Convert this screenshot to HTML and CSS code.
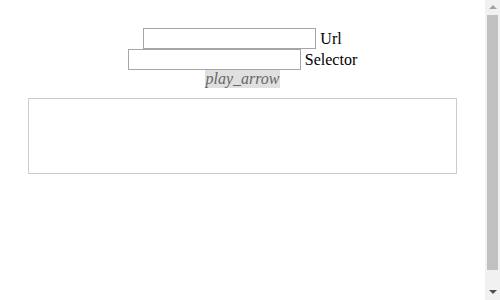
FILE: index.html
```html
<!DOCTYPE html>
<html>
<head>
<meta charset="utf-8">
<link rel="stylesheet" href="styles.css">
</head>
<body>
<div class="form">
  <div class="row"><input type="text" class="field"> Url</div>
  <div class="row"><input type="text" class="field"> Selector</div>
  <div class="row"><i class="run">play_arrow</i></div>
</div>
<div class="output"></div>
<div class="scrollbar">
  <span class="arrow arrow-up"></span>
  <span class="thumb"></span>
  <span class="arrow arrow-down"></span>
</div>
</body>
</html>
```
FILE: styles.css
```css
body {
  margin: 8px 23px 8px 8px;
  font-family: "Liberation Serif", "Times New Roman", serif;
  font-size: 16px;
  color: #000;
  background: #fff;
}
.form {
  padding-top: 20px;
  text-align: center;
}
.row {
  height: 21px;
  line-height: 21px;
}
.field {
  box-sizing: border-box;
  width: 173px;
  height: 21px;
  margin: 0;
  padding: 1px 2px;
  border: 1px solid #a6a6a6;
  vertical-align: top;
  font-size: 13px;
}
.run {
  display: inline-block;
  line-height: 18px;
  color: #666;
  background: #e0e0e0;
  vertical-align: top;
}
.output {
  margin: 7px 20px 0;
  height: 74px;
  border: 1px solid #ccc;
}
.scrollbar {
  position: fixed;
  top: 0;
  right: 0;
  width: 15px;
  height: 100%;
  background: #f1f1f1;
}
.thumb {
  position: absolute;
  top: 15px;
  left: 2px;
  width: 11px;
  height: 255px;
  background: #c1c1c1;
}
.arrow {
  position: absolute;
  left: 4px;
  width: 0;
  height: 0;
  border-left: 4px solid transparent;
  border-right: 4px solid transparent;
}
.arrow-up {
  top: 5px;
  border-bottom: 4px solid #a3a3a3;
}
.arrow-down {
  bottom: 6px;
  border-top: 4px solid #505050;
}
```
